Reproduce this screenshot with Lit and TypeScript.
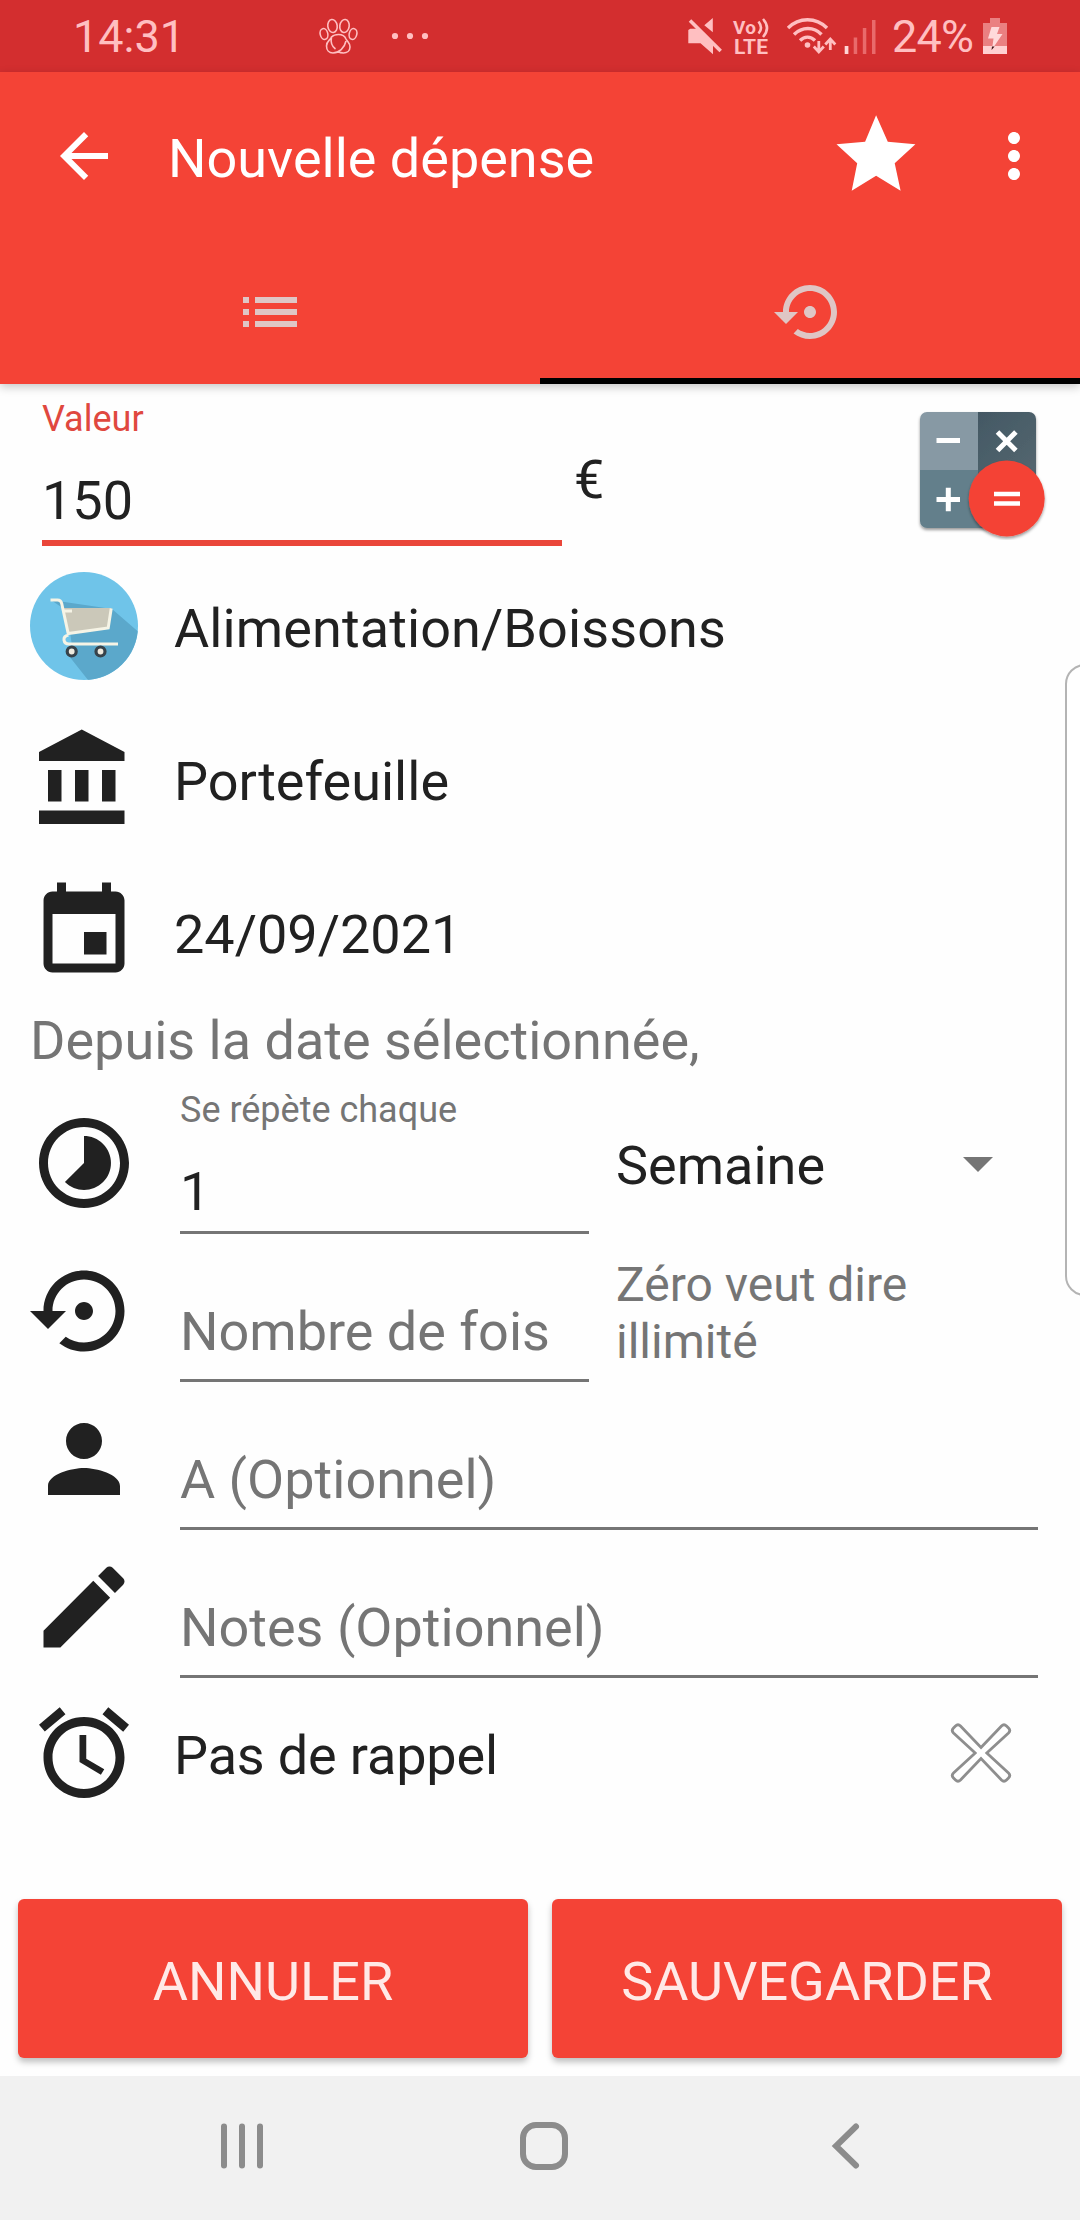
import { LitElement, html, css, svg, nothing } from "lit";
import { customElement, property } from "lit/decorators.js";

const ICONS: Record<string, string> = {
  back: "M20 11H7.83l5.59-5.59L12 4l-8 8 8 8 1.41-1.41L7.83 13H20v-2z",
  more: "M12 8c1.1 0 2-.9 2-2s-.9-2-2-2-2 .9-2 2 .9 2 2 2zm0 2c-1.1 0-2 .9-2 2s.9 2 2 2 2-.9 2-2-.9-2-2-2zm0 6c-1.1 0-2 .9-2 2s.9 2 2 2 2-.9 2-2-.9-2-2-2z",
  list: "M3 13h2v-2H3v2zm0 4h2v-2H3v2zm0-8h2V7H3v2zm4 4h14v-2H7v2zm0 4h14v-2H7v2zM7 7v2h14V7H7z",
  restore:
    "M14 12c0-1.1-.9-2-2-2s-2 .9-2 2 .9 2 2 2 2-.9 2-2zm-2-9c-4.97 0-9 4.03-9 9H0l4 4 4-4H5c0-3.87 3.13-7 7-7s7 3.13 7 7-3.13 7-7 7c-1.51 0-2.91-.49-4.06-1.3l-1.42 1.44C8.04 20.3 9.94 21 12 21c4.97 0 9-4.03 9-9s-4.03-9-9-9z",
  bank: "M4 10v7h3v-7H4zm6 0v7h3v-7h-3zM2 22h19v-3H2v3zm14-12v7h3v-7h-3zm-4.5-9L2 6v2h19V6l-9.5-5z",
  event:
    "M17 12h-5v5h5v-5zM16 1v2H8V1H6v2H5c-1.11 0-1.99.9-1.99 2L3 19c0 1.1.89 2 2 2h14c1.1 0 2-.9 2-2V5c0-1.1-.9-2-2-2h-1V1h-2zm3 18H5V8h14v11z",
  timelapse:
    "M16.24 7.76C15.07 6.59 13.54 6 12 6v6l-4.24 4.24c2.34 2.34 6.14 2.34 8.49 0 2.34-2.34 2.34-6.14-.01-8.48zM12 2C6.48 2 2 6.48 2 12s4.48 10 10 10 10-4.48 10-10S17.52 2 12 2zm0 18c-4.42 0-8-3.58-8-8s3.58-8 8-8 8 3.58 8 8-3.58 8-8 8z",
  person:
    "M12 12c2.21 0 4-1.79 4-4s-1.79-4-4-4-4 1.79-4 4 1.79 4 4 4zm0 2c-2.67 0-8 1.34-8 4v2h16v-2c0-2.66-5.33-4-8-4z",
  edit: "M3 17.25V21h3.75L17.81 9.94l-3.75-3.75L3 17.25zM20.71 7.04c.39-.39.39-1.02 0-1.41l-2.34-2.34c-.39-.39-1.02-.39-1.41 0l-1.83 1.83 3.75 3.75 1.83-1.83z",
  alarm:
    "M22 5.72l-4.6-3.86-1.29 1.53 4.6 3.86L22 5.72zM7.88 3.39L6.6 1.86 2 5.71l1.29 1.53 4.59-3.85zM12.5 8H11v6l4.75 2.85.75-1.23-4-2.37V8zM12 4c-4.97 0-9 4.03-9 9s4.02 9 9 9c4.97 0 9-4.03 9-9s-4.03-9-9-9zm0 16c-3.87 0-7-3.13-7-7s3.13-7 7-7 7 3.13 7 7-3.13 7-7 7z",
};

@customElement("md-icon")
class MdIcon extends LitElement {
  @property() name = "";
  static styles = css`
    :host {
      display: block;
      flex: none;
      width: 108px;
      height: 108px;
    }
    .icon {
      display: block;
      width: 100%;
      height: 100%;
      fill: currentColor;
    }
  `;
  render() {
    return html`<svg class="icon" viewBox="0 0 24 24"><path d=${ICONS[this.name] ?? ""}></path></svg>`;
  }
}

@customElement("status-bar")
class StatusBar extends LitElement {
  static styles = css`
    :host {
      display: flex;
      height: 72px;
      background: #d32e2f;
      color: #ffbfc1;
      font-size: 45px;
      line-height: 72px;
    }
    .time {
      width: 243px;
      padding-left: 73px;
    }
    .notif {
      width: 370px;
    }
    .percent {
      width: 90px;
      padding-left: 2px;
      letter-spacing: -0.8px;
    }
    .time,
    .percent {
      height: 73px;
      padding-top: 1px;
      white-space: nowrap;
    }
    svg {
      display: block;
      flex: none;
    }
    .lte {
      font: 700 21px Roboto, sans-serif;
    }
    .vo {
      font: 700 19px Roboto, sans-serif;
    }
  `;
  render() {
    return html`
      <div class="time">14:31</div>
      <div class="notif">
        <svg width="120" height="72" viewBox="316 0 120 72" fill="none" stroke="currentColor" stroke-width="1.6">
          <ellipse cx="332.5" cy="26" rx="4.7" ry="6.5" transform="rotate(-8 332.5 26)"></ellipse>
          <ellipse cx="344.5" cy="26" rx="4.7" ry="6.5" transform="rotate(8 344.5 26)"></ellipse>
          <ellipse cx="324" cy="34" rx="3.8" ry="5.5" transform="rotate(-14 324 34)"></ellipse>
          <ellipse cx="353" cy="34" rx="3.8" ry="5.5" transform="rotate(14 353 34)"></ellipse>
          <path d="M326.500 46c0-5 4-6 5-9 2-2 4.500-2.500 7-2.500 4 0 6.500 2 7.500 4.500 1.500 3 4 4 4 8 0 4-3 6-6.500 6-3 0-4-.5-6-1.500M326.500 46c0 4 2.500 7 6.500 7 6 0 11.500-5 13-12M331.500 37c-1 5 .5 9.500 4 12"></path>
          <g fill="currentColor" stroke="none">
            <circle cx="395" cy="36" r="3.1"></circle>
            <circle cx="410" cy="36" r="3.1"></circle>
            <circle cx="425" cy="36" r="3.1"></circle>
          </g>
        </svg>
      </div>
      <svg width="204" height="72" viewBox="686 0 204 72" fill="currentColor">
        <path d="M712.800 18v14.300l-8.500-7zM688.300 30l2-1.200h6.500l16.200 16v9.500l-12.500-11h-12.200z"></path>
        <path d="M690 20.500l30.700 30.500" stroke="currentColor" stroke-width="3.6"></path>
        <text class="vo" x="733" y="33.5" textLength="23">Vo</text>
        <text class="lte" x="734" y="53.8" textLength="34">LTE</text>
        <g fill="none" stroke="currentColor" stroke-width="2.6">
          <path d="M758.500 21.500q5 6.500 0 12M763 19q8 9 0 18"></path>
        </g>
        <g fill="none" stroke="currentColor" stroke-width="3.4">
          <path d="M788 28c11-11 28-11 39 0M794 34.500c8-8 20-8 27.500 0M800 40.500c4.500-4.500 10.500-4.500 15 0"></path>
        </g>
        <circle cx="807.500" cy="45" r="2.8"></circle>
        <g fill="none" stroke="currentColor" stroke-width="2.8">
          <path d="M818.800 41v11.500M813.800 46.500l5 5.500 5-5.500M830.300 50V39M825.300 44.500l5-5.500 5 5.500"></path>
        </g>
        <rect x="844.7" y="46" width="3.7" height="8" fill="#ffd5d5"></rect>
        <g fill="#e96a6b">
          <rect x="853.7" y="37.5" width="3.5" height="16.500"></rect>
          <rect x="862.8" y="28" width="3.5" height="26"></rect>
          <rect x="872" y="20" width="3.5" height="34"></rect>
        </g>
      </svg>
      <div class="percent">24%</div>
      <svg width="30" height="72" viewBox="982 0 30 72">
        <path d="M990 18h10v5h7v23h-24V23h7z" fill="#ea8081"></path>
        <path d="M983 46h24v8h-24z" fill="#ffd0d1"></path>
        <path d="M991.500 27h8l-2.500 7h5.500l-10.500 15.500 1.500-11h-5.500z" fill="#ffd9da"></path>
        <path d="M992 46.500h2.600L991.600 50z" fill="#3c1114"></path>
      </svg>
    `;
  }
}

@customElement("form-field")
class FormField extends LitElement {
  @property() label = "";
  @property() value = "";
  @property() placeholder = "";
  static styles = css`
    :host {
      display: flex;
      flex-direction: column;
      box-sizing: border-box;
      justify-content: flex-end;
      border-bottom: 3px solid #757575;
      font-size: 54px;
      line-height: 64px;
      color: #212121;
    }
    .label {
      font-size: 36px;
      line-height: 42px;
      color: var(--label, #757575);
      margin-bottom: 29px;
    }
    .value {
      margin-bottom: 7px;
    }
    .hint {
      color: #757575;
      margin-bottom: 15px;
    }
  `;
  render() {
    return html`
      ${this.label ? html`<div class="label">${this.label}</div>` : nothing}
      ${this.value
        ? html`<div class="value">${this.value}</div>`
        : html`<div class="hint">${this.placeholder}</div>`}
    `;
  }
}

const star = svg`<path d="M40.1 1.3l11.7 26.400 27.600 2.600-20.700 19 5.900 27.400-24.500-15-24.400 15 5.500-27.400-20.700-19 28.600-2.600z" fill="#fff"></path>`;

@customElement("app-root")
class AppRoot extends LitElement {
  static styles = css`
    :host {
      display: flex;
      flex-direction: column;
      position: relative;
      width: 1080px;
      height: 2220px;
      overflow: hidden;
      background: #fefefe;
      color: #212121;
      font-family: Roboto, sans-serif;
      font-size: 54px;
      line-height: 64px;
    }
    .header {
      background: #f44336;
      color: #fff;
      box-shadow: 0 3px 9px rgba(0, 0, 0, 0.22);
      height: 312px;
      flex: none;
    }
    .toolbar {
      display: flex;
      align-items: center;
      height: 168px;
      padding: 0 30px 0 48px;
    }
    .action {
      width: 72px;
      height: 72px;
    }
    .title {
      flex: 1;
      margin-left: 48px;
      padding-top: 5px;
    }
    .star {
      display: block;
      margin: 0 61px 4px 0;
    }
    .tabs {
      display: grid;
      grid-template-columns: 1fr 1fr;
      height: 144px;
      color: #dfc6c5;
    }
    .tab {
      display: flex;
      align-items: center;
      justify-content: center;
      box-sizing: border-box;
      padding-top: 6px;
      border-bottom: 6px solid transparent;
    }
    .active {
      border-color: #000;
    }
    .form {
      flex: 1;
      display: flex;
      flex-direction: column;
      padding: 0 42px 0 30px;
    }
    .amount {
      display: flex;
      height: 188px;
    }
    .amount-field {
      width: 520px;
      height: 162px;
      margin-left: 12px;
      border-bottom: 6px solid #ea463a;
      --label: #e0483f;
    }
    .currency {
      flex: 1;
      padding: 64px 0 0 12px;
    }
    .calc {
      display: block;
      margin-top: 24px;
      margin-right: -10px;
    }
    .entries {
      display: grid;
      gap: 45px;
    }
    .row {
      display: flex;
    }
    .entry {
      height: 108px;
    }
    .entry-text {
      margin-left: 36px;
      padding-top: 25px;
    }
    .category {
      letter-spacing: 0.1px;
    }
    .since {
      margin-top: 23px;
      color: #757575;
    }
    .repeat {
      height: 161px;
    }
    .line {
      height: 148px;
    }
    .field {
      margin-left: 42px;
      flex: 1;
    }
    .short {
      flex: none;
      width: 409px;
    }
    .row-icon {
      margin-top: 23px;
    }
    .repeat .row-icon {
      margin-top: 36px;
    }
    .unit {
      flex: 1;
      display: flex;
      justify-content: space-between;
      padding: 61px 45px 0 27px;
    }
    .caret {
      display: block;
      margin-top: 23px;
    }
    .note {
      flex: 1;
      padding: 22px 0 0 27px;
      font-size: 48px;
      line-height: 57px;
      color: #757575;
    }
    .reminder {
      padding-top: 21px;
      justify-content: space-between;
    }
    .reminder .entry-text {
      flex: 1;
      letter-spacing: -0.15px;
    }
    .clear {
      display: block;
      margin: 23px 26px 0 0;
    }
    .buttons {
      display: grid;
      grid-template-columns: 1fr 1fr;
      gap: 24px;
      padding: 0 18px 18px;
    }
    .button {
      height: 159px;
      border: 0;
      border-radius: 6px;
      background: #f44336;
      color: #ffe9e7;
      font: 400 54px Roboto, sans-serif;
      padding: 6px 0 0;
      box-shadow: 0 4px 6px rgba(0, 0, 0, 0.25);
    }
    .nav {
      display: flex;
      flex: none;
      height: 144px;
      background: #f1f1f1;
    }
    .edge {
      position: absolute;
      left: 1065px;
      top: 664px;
      width: 40px;
      height: 628px;
      border: 2px solid #b4b4b4;
      border-radius: 20px;
      background: #fff;
    }
  `;

  render() {
    return html`
      <status-bar></status-bar>
      <div class="header">
        <div class="toolbar">
          <md-icon class="action" name="back"></md-icon>
          <div class="title">Nouvelle dépense</div>
          <svg class="star" width="81" height="80" viewBox="0 0 81 80">${star}</svg>
          <md-icon class="action" name="more"></md-icon>
        </div>
        <div class="tabs">
          <div class="tab"><md-icon class="action" name="list"></md-icon></div>
          <div class="tab active"><md-icon class="action" name="restore"></md-icon></div>
        </div>
      </div>

      <div class="form">
        <div class="amount">
          <form-field class="amount-field" label="Valeur" value="150"></form-field>
          <div class="currency">€</div>
          ${this.calculator()}
        </div>
        <div class="entries">
          <div class="row entry">
            ${this.cart()}
            <div class="entry-text category">Alimentation/Boissons</div>
          </div>
          <div class="row entry">
            <md-icon name="bank"></md-icon>
            <div class="entry-text">Portefeuille</div>
          </div>
          <div class="row entry">
            <md-icon name="event"></md-icon>
            <div class="entry-text">24/09/2021</div>
          </div>
        </div>
        <div class="since">Depuis la date sélectionnée,</div>
        <div class="row repeat">
          <md-icon class="row-icon" name="timelapse"></md-icon>
          <form-field class="field short" label="Se répète chaque" value="1"></form-field>
          <div class="unit">
            <span>Semaine</span>
            <svg class="caret" width="30" height="15" viewBox="0 0 30 15"><path d="M0 0h30L15 15z" fill="#757575"></path></svg>
          </div>
        </div>
        <div class="row line">
          <md-icon class="row-icon" name="restore"></md-icon>
          <form-field class="field short" placeholder="Nombre de fois"></form-field>
          <div class="note">Zéro veut dire<br />illimité</div>
        </div>
        <div class="row line">
          <md-icon class="row-icon" name="person"></md-icon>
          <form-field class="field" placeholder="A (Optionnel)"></form-field>
        </div>
        <div class="row line">
          <md-icon class="row-icon" name="edit"></md-icon>
          <form-field class="field" placeholder="Notes (Optionnel)"></form-field>
        </div>
        <div class="row reminder">
          <md-icon name="alarm"></md-icon>
          <div class="entry-text">Pas de rappel</div>
          <svg class="clear" width="62" height="62" viewBox="-31 -31 62 62">
            <path
              d="M0-5.500L20.500-27Q23-29.500 25.500-27L27.500-25Q30-22.500 27.500-20L5.800 0 27.500 20Q30 22.500 27.500 25L25.500 27Q23 29.500 20.500 27L0 5.500-20.500 27Q-23 29.500-25.500 27L-27.500 25Q-30 22.500-27.500 20L-5.800 0-27.500-20Q-30-22.500-27.500-25L-25.500-27Q-23-29.500-20.500-27Z"
              fill="#fff"
              stroke="#8e8e8e"
              stroke-width="2.8"
            ></path>
          </svg>
        </div>
      </div>

      <div class="buttons">
        <button class="button">ANNULER</button>
        <button class="button">SAUVEGARDER</button>
      </div>
      <div class="nav">
        <svg width="1080" height="144" viewBox="0 0 1080 144" fill="none" stroke="#8c8c8c" stroke-width="6">
          <path d="M224 50.500v39M242 50.500v39M260 50.500v39" stroke-linecap="round"></path>
          <rect x="523" y="49" width="42" height="42" rx="13"></rect>
          <path d="M856 50.500L836 70l20 19.500" stroke-linecap="round"></path>
        </svg>
      </div>
      <div class="edge"></div>
    `;
  }

  private calculator() {
    return html`<svg class="calc" width="132" height="132" viewBox="916 408 132 132">
      <defs>
        <clipPath id="body"><rect x="920" y="412" width="116" height="116" rx="7"></rect></clipPath>
        <linearGradient id="dark" x1="0" y1="0" x2="1" y2="1">
          <stop offset="0" stop-color="#435864"></stop>
          <stop offset="1" stop-color="#54666f"></stop>
        </linearGradient>
        <filter id="drop" x="-20%" y="-20%" width="140%" height="140%">
          <feDropShadow dx="0" dy="2" stdDeviation="1.5" flood-opacity="0.4"></feDropShadow>
        </filter>
      </defs>
      <g filter="url(#drop)">
        <g clip-path="url(#body)">
          <path d="M920 412h58v58h-58z" fill="#8799a4"></path>
          <path d="M978 412h58v58h-58z" fill="url(#dark)"></path>
          <path d="M920 470h88v58h-88z" fill="#637f8b"></path>
          <path d="M978 470h58v20h-58z" fill="#50646e"></path>
        </g>
      </g>
      <circle cx="1006.7" cy="498.5" r="38" fill="#f44336" filter="url(#drop)"></circle>
      <g stroke="#fff" stroke-width="5" fill="none">
        <path d="M936.500 440.500h23.500M936.500 499.500h23.500M948.300 487.800v23.500M997.500 432l18.400 18.400M1015.900 432l-18.400 18.400"></path>
        <path d="M994 494h26M994 503.500h26" stroke-width="4.5"></path>
      </g>
    </svg>`;
  }

  private cart() {
    return html`<svg width="108" height="108" viewBox="30 572 108 108">
      <defs>
        <clipPath id="disc"><circle cx="84" cy="626" r="54"></circle></clipPath>
      </defs>
      <g clip-path="url(#disc)">
        <path d="M30 572h108v108H30z" fill="#6fc4e9"></path>
        <path d="M112 609l30 26v50H92l-23-29 3-10-5-35-16-11z" fill="#5ba8cb"></path>
      </g>
      <path d="M63 608h48.500l-3 19.500-40 5z" fill="#cbc8b9"></path>
      <path d="M50.500 600h7q3.500 0 4.200 3.500l6.500 30 40-5.500 3-19.500M68.500 635q-5 1-4.500 5t5 4H118" fill="none" stroke="#f6f4e6" stroke-width="3"></path>
      <path d="M64 611h8" stroke="#f6f4e6" stroke-width="3"></path>
      <g fill="#efeade" stroke="#37434b" stroke-width="3.2">
        <circle cx="71.7" cy="651.5" r="4.5"></circle>
        <circle cx="100.5" cy="651.5" r="4.5"></circle>
      </g>
    </svg>`;
  }
}
